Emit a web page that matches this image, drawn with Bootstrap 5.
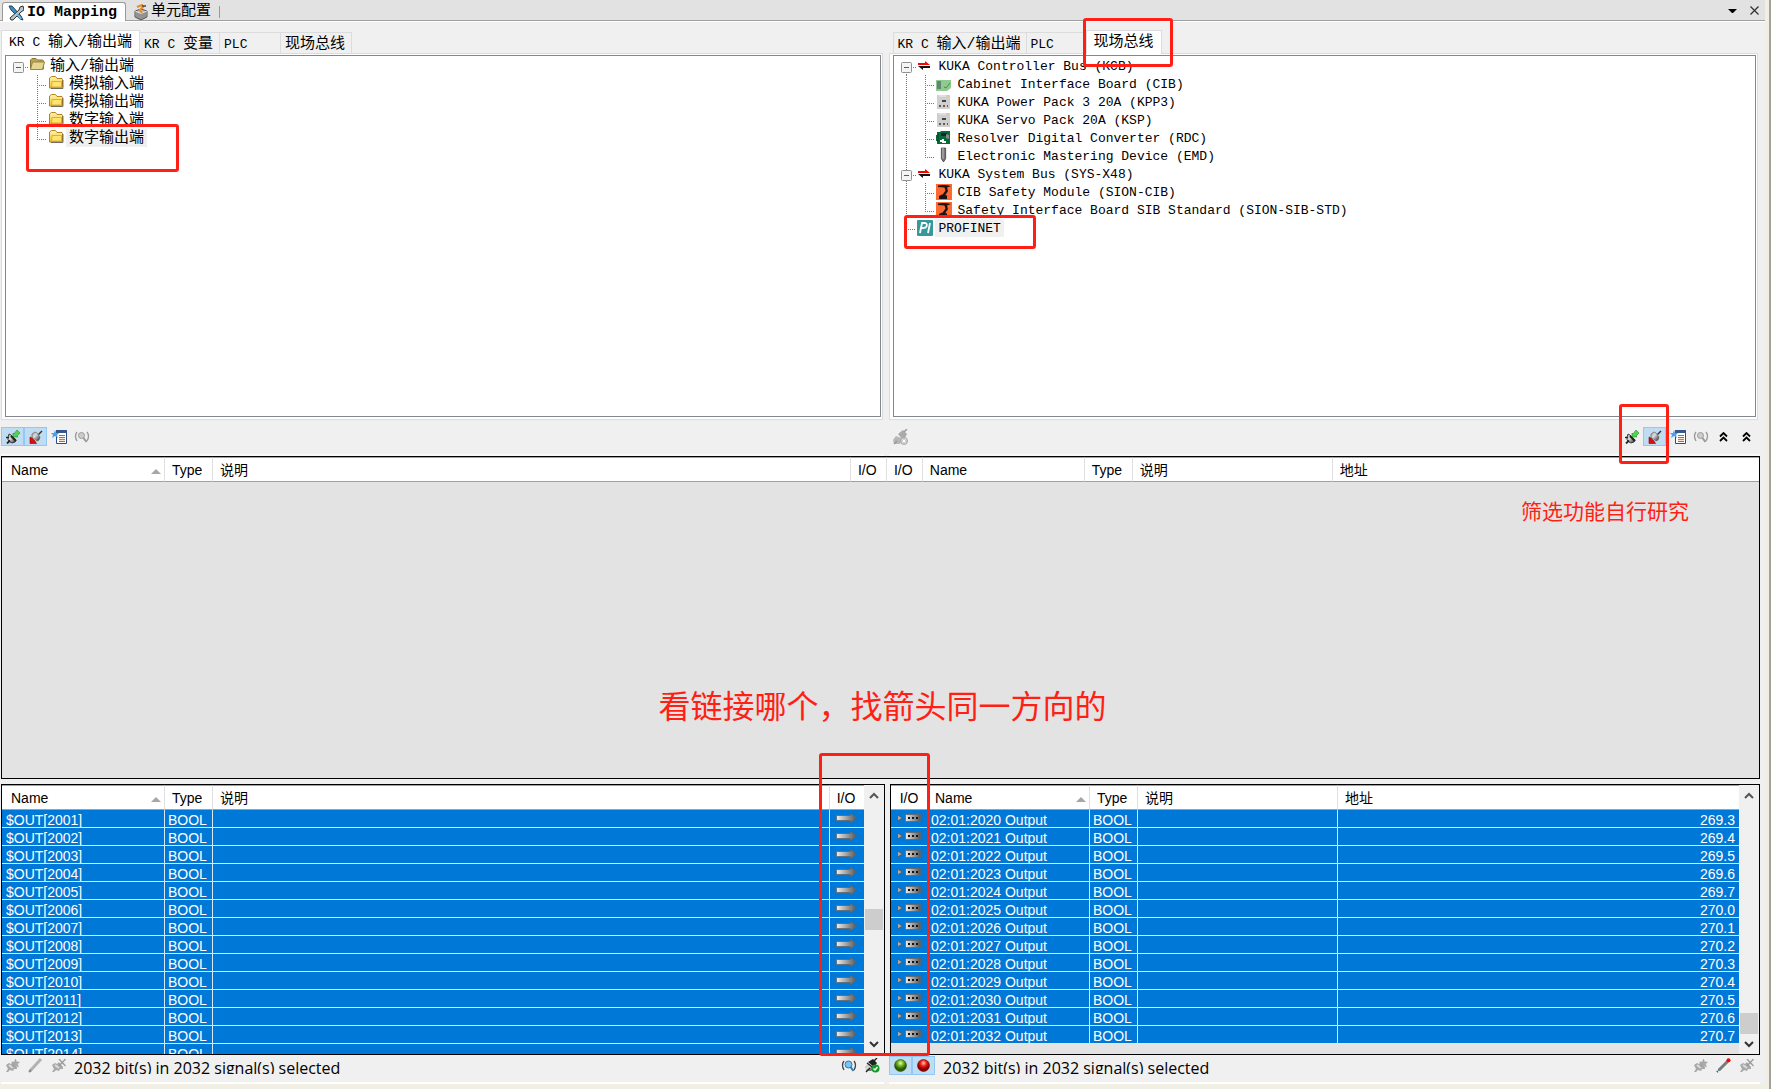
<!DOCTYPE html>
<html lang="zh-CN">
<head>
<meta charset="utf-8">
<meta name="viewport" content="width=device-width, initial-scale=1">
<title>IO Mapping</title>
<link rel="stylesheet" href="https://cdn.jsdelivr.net/npm/bootstrap@5.3.0/dist/css/bootstrap.min.css">
<style>
:root { --mono: "Liberation Mono", "Noto Sans CJK SC", monospace; --ui: "Liberation Sans", "Noto Sans CJK SC", sans-serif; --note: #ff1f14; }
body { background: #f1eee4; font-family: var(--ui); font-size: 14px; line-height: 18px; color: #000; }
button { color: #000; background: transparent; border: 0; padding: 0; }
svg { display: block; flex: none; }
.frame { min-height: 100vh; border-right: 2px solid #a3a199; padding: 0 4px 5px 0; }
.app-body { background: #f0f0f0; min-width: 0; }
.work { padding: 0 5px 0 1px; }
.half-l { flex: 884 1 0; min-width: 0; }
.half-r { flex: 870 1 0; min-width: 0; }
.pair { gap: 5px; }
.mono { font-family: var(--mono); font-size: 13px; white-space: pre; }
.zh { font-size: 15px; }

.doc-bar { height: 22px; background: #e2e2e2; border-bottom: 1px solid #fff; box-shadow: inset 0 -1px #a0a0a0; padding-left: 2px; }
.doc-tab { height: 20px; padding: 2px 8px 0 8px; line-height: 20px; gap: 3px; }
.doc-tab.active { height: 19px; background: #fff; border: 1px solid #999; border-bottom: 0; border-radius: 3px 3px 0 0; font-weight: bold; padding-left: 5px; }
.doc-sep { width: 1px; height: 12px; background: #999; margin-bottom: 3px; }
.win-keys { gap: 13px; padding-right: 6px; }

.pane-tabs { height: 31px; }
.pane-tab { height: 21px; line-height: 21px; padding: 1px 6px 0 4px; border: 1px solid #dcdcdc; border-width: 1px 1px 0 0; text-align: left; min-width: 61px; }
.pane-tab.first { border-left-width: 1px; padding: 1px 5px 0 3px; }
.right-pane .pane-tab { min-width: 59px; }
.pane-tab.active { height: 24px; margin-bottom: -1px; background: #fff; padding: 0 7px; border-left-width: 1px; line-height: 22px; z-index: 1; }
.tree-shell { border: 1px solid #dcdcdc; background: #fff; padding: 1px 1px 2px 3px; height: 367px; }
.tree-box { border: 1px solid #828790; height: 100%; padding: 1px 3px; overflow: hidden; }
.left-pane { padding-right: 1px; }
.right-pane { padding-right: 2px; }
.t-row { height: 18px; }
.t-icon { width: 19px; padding-left: 1px; flex: none; }
.t-label { line-height: 20px; height: 18px; padding: 0 3px; }
.t-label .zh { line-height: 19px; vertical-align: top; }
.t-label.sel { background: #f0f0f0; }
.anchor { position: relative; }

.tools { height: 36px; padding-top: 7px; border-bottom: 2px solid #f8f8f8; }
.tool { width: 23px; height: 19px; display: flex; align-items: center; justify-content: center; border: 1px solid transparent; }
.tool.on { background: #bfdcf3; border-color: #90c8f6; }
.status { height: 29px; padding-top: 1px; border-bottom: 2px solid #fff; }
.status-text { font-family: "Open Sans", "Noto Sans", sans-serif; font-size: 16px; line-height: 22px; height: 18px; padding: 1px 0 0 4px; overflow: hidden; white-space: nowrap; }
.status-r .status-text { padding-left: 8px; }

.sheet { border: 1px solid #000; background: #e3e3e3; overflow: hidden; }
.sheet-mid { min-height: 323px; position: relative; margin-bottom: 5px; }
.sheet-low { height: 271px; }
.sheet table { table-layout: fixed; width: 100%; border-collapse: separate; border-spacing: 0; }
.sheet th { height: 25px; padding: 0 8px 0 7px; font-weight: normal; background: #fff; border-right: 1px solid #e0e0e0; border-bottom: 1px solid #a0a0a0; border-top: 1px solid #a0a0a0; white-space: nowrap; }
.sheet th:first-child { padding-left: 9px; }
.sheet th:last-child { border-right: 0; }
.sheet th.io { text-align: center; padding: 0 2px 0 0; }
.sheet th.io:first-child { padding: 0; }
.sheet td { height: 18px; padding: 0; background: #0078d7; color: #fff; border-right: 1px solid #d9e8f5; border-bottom: 1px solid #d9e8f5; }
.sheet td:last-child { border-right: 0; }
.cell { height: 17px; overflow: hidden; padding: 1px 4px 0 3px; white-space: nowrap; }
.sheet td:first-child .cell { padding-left: 4px; }
.cell svg { margin: 2px auto 0; }
.sort { float: right; margin: 8px -5px 0 0; }
.scroller { width: 20px; background: #f0f0f0; padding: 0 1px; flex: none; }
.thumb { height: 21px; background: #cdcdcd; }
.arrow { height: 20px; width: 100%; display: flex; align-items: center; justify-content: center; }

.mark-box { position: absolute; border: 3px solid var(--note); border-radius: 3px; pointer-events: none; z-index: 5; }
.mark-out { left: -40px; top: -5px; width: 153px; height: 48px; }
.mark-bus { left: -4px; top: -13px; width: 90px; height: 49px; }
.mark-net { left: -31px; top: -4px; width: 132px; height: 34px; }
.mark-filter { left: -2px; top: -24px; width: 50px; height: 60px; }
.mark-io { left: -71px; top: -31px; width: 111px; height: 303px; }
.remark { position: absolute; color: var(--note); font-family: "Noto Sans CJK SC", sans-serif; white-space: nowrap; }
.remark-s { font-size: 21px; line-height: 30px; right: 70px; top: 38px; }
.remark-l { font-size: 32px; line-height: 40px; left: 0; right: -4px; top: 227px; text-align: center; }
</style>
<script src="https://cdn.jsdelivr.net/npm/bootstrap@5.3.0/dist/js/bootstrap.bundle.min.js"></script>
</head>
<body>
<svg width="0" height="0" class="position-absolute" aria-hidden="true">
  <defs>
    <linearGradient id="steel"><stop offset="0" stop-color="#eee"/><stop offset="1" stop-color="#555"/></linearGradient>
    <linearGradient id="gold" x2="0" y2="1"><stop offset="0" stop-color="#fff6a8"/><stop offset="1" stop-color="#f3bd3c"/></linearGradient>
    <linearGradient id="metal" x2="1" y2="1"><stop offset="0" stop-color="#999"/><stop offset=".4" stop-color="#ddd"/><stop offset="1" stop-color="#222"/></linearGradient>
    <radialGradient id="gball" cy=".3"><stop offset="0" stop-color="#e8ffc0"/><stop offset=".5" stop-color="#6fb51c"/><stop offset="1" stop-color="#2c5a05"/></radialGradient>
    <radialGradient id="rball" cy=".3"><stop offset="0" stop-color="#ffd0c0"/><stop offset=".5" stop-color="#f02010"/><stop offset="1" stop-color="#800"/></radialGradient>
  </defs>
  <symbol id="i-tools" viewBox="0 0 16 16"><path d="M1 1l3 0 9 10 2 4-3-1L3 5z" fill="#3b8ec4" stroke="#23435c"/><path d="M15 1l-3 1-1 3-9 8 1 2 2 0 8-8 3-2z" fill="#b8c4cc" stroke="#333"/><path d="M9 9l4 5" stroke="#6ec0ef" stroke-width="2"/></symbol>
  <symbol id="i-cell" viewBox="0 0 14 16"><path d="M1 7l6-2 6 2v6l-6 3-6-3z" fill="#bbb" stroke="#555"/><path d="M3 8v6M5 9v6M7 9v7M9 9v6M11 8v6" stroke="#555" stroke-width=".8" fill="none"/><path d="M1 7l6 2.500L13 7" stroke="#eee" stroke-width=".8" fill="none"/><path d="M3 3l5-2 1 2-3 3 2 3" fill="none" stroke="#ed8a22" stroke-width="2"/><path d="M8 2h4" stroke="#444" stroke-width="1.5"/></symbol>
  <symbol id="i-folder" viewBox="0 0 16 14"><path d="M1.500 12V3l2-1.500h4l1.500 2h5l.5 1V12l-1 1h-12z" fill="url(#gold)" stroke="#b98416"/><path d="M4 6.500h9.500V12H3.500z" fill="#ffe66b" stroke="#d9a02a" stroke-width=".8"/><path d="M3 13.500h12V5" stroke="#555" fill="none" stroke-width=".8"/></symbol>
  <symbol id="i-open" viewBox="0 0 16 14"><path d="M1.500 12V3l1.500-1.500h4l1.500 1.500h5l1 1V12z" fill="#b9a45a" stroke="#8d7430"/><path d="M1.500 12.500l2-7.500h12l-2 7.500z" fill="#e6d591" stroke="#9b8340"/></symbol>
  <symbol id="i-bus" viewBox="0 0 14 10"><path d="M1 2h7V0l5 4H1zM1 2h8v2H1z" fill="#f00"/><path d="M13 5H1l5 4V7h7z" fill="#111"/></symbol>
  <symbol id="i-cib" viewBox="0 0 15 13"><path d="M0 1h15v8l-4 3H0z" fill="#8fca8f"/><path d="M1 3h4M1 5h4M1 7h4M1 9h4" stroke="#345" stroke-width="1.200"/><path d="M8 8l2 1 4-5" stroke="#4b8d4b" fill="none"/></symbol>
  <symbol id="i-pack" viewBox="0 0 13 14"><path d="M0 0h13v14H0z" fill="#cfcfcf"/><path d="M2 1h7" stroke="#eee"/><path d="M10 1h2" stroke="#dc6"/><path d="M5 5h4v2H5z" fill="#444"/><path d="M2 10h2v2H2zM6 10h2v2H6zM10 10h1v2h-1z" fill="#754"/></symbol>
  <symbol id="i-rdc" viewBox="0 0 15 14"><path d="M1 1h3l1-1h9v13H1v-3H0V4h1z" fill="#0a6b3a"/><path d="M5 2h6v3H5z" fill="#124"/><path d="M10 3l3 1v4l-3-1z" fill="#888"/><path d="M6 8h2v2h2v2H6v-1H4V9h2z" fill="#fff"/><path d="M2 3v8" stroke="#043"/></symbol>
  <symbol id="i-emd" viewBox="0 0 6 15"><path d="M1 1h4v10l-2 3-2-3z" fill="#777" stroke="#444" stroke-width=".8"/><path d="M2.500 1v10" stroke="#bbb"/></symbol>
  <symbol id="i-sion" viewBox="0 0 16 16"><path d="M0 0h16v16H0z" fill="#ff6a33"/><path d="M2 1.500c4-.8 8-.8 13 .5l-4 1.500 1 3.500-3 4.500H6l3.500-5-1-3L2 3z" fill="#1b1212"/><path d="M3 12l3-1.500 5 1V15H3z" fill="#1b1212"/></symbol>
  <symbol id="i-pi" viewBox="0 0 16 16"><rect width="16" height="16" rx="1" fill="#35989a"/><path d="M3 13L5 3h3.500q2 .5 1 3.500-1 2-5 1.500M11 13l2-10" fill="none" stroke="#fff" stroke-width="1.800"/></symbol>
  <symbol id="g-minus" viewBox="0 0 19 18"><path d="M16 10.500h3" stroke="#777" stroke-dasharray="1 1"/><rect x="4.500" y="5.500" width="10" height="10" rx="1" fill="#f4f4f4" stroke="#919191"/><path d="M7 10.500h5" stroke="#3a5f9e"/></symbol>
  <symbol id="g-minus-down" viewBox="0 0 19 18"><use href="#g-minus"/><path d="M9.500 17v1" stroke="#777"/></symbol>
  <symbol id="g-minus-mid" viewBox="0 0 19 18"><path d="M9.500 0v18" stroke="#777" stroke-dasharray="1 1"/><use href="#g-minus"/></symbol>
  <symbol id="g-line" viewBox="0 0 19 18"><path d="M9.500 0v18" stroke="#777" stroke-dasharray="1 1"/></symbol>
  <symbol id="g-tee" viewBox="0 0 19 18"><path d="M9.500 0v18M9 10.500h11" stroke="#777" stroke-dasharray="1 1"/></symbol>
  <symbol id="g-end" viewBox="0 0 19 18"><path d="M9.500 0v10M9 10.500h11" stroke="#777" stroke-dasharray="1 1" fill="none"/></symbol>
  <symbol id="i-plug" viewBox="0 0 14 14"><path d="M2 7l1-3 2 1 5 5-1 2-3 1-2-1-2-2z" fill="url(#metal)" stroke="#222" stroke-width=".8"/><path d="M1 13.500l3-3" stroke="#222" stroke-width="1.800"/><path d="M0 7.500h3" stroke="#222" stroke-width="1.400"/><path d="M5 6l5 5" stroke="#222" stroke-width="2"/></symbol>
  <symbol id="i-connected" viewBox="0 0 14 14"><use href="#i-plug"/><path d="M7 7V3l1 1 3-4 3 3-3 3 1 1z" fill="#55d255" stroke="#249024" stroke-width=".6"/></symbol>
  <symbol id="i-unplugged" viewBox="0 0 14 14"><path d="M3 4l3-2 2 1 3 4-1 3-2 1-5-4z" fill="url(#metal)" stroke="#555" stroke-width=".6"/><path d="M9.500 4.500L13 1" stroke="#333" stroke-width="1.400"/><path d="M1 7l2 1 3 3 1.500 2.500H1z" fill="#d61010" stroke="#900" stroke-width=".6"/></symbol>
  <symbol id="i-list" viewBox="0 0 16 14"><path d="M5.500.5h10v13h-10z" fill="#fff" stroke="#2b4d80"/><path d="M5 0h11v3H5z" fill="#34588c"/><path d="M8 5.500h6M8 7.500h6M8 11.500h6" stroke="#777"/><path d="M8 9.500h6" stroke="#f07020" stroke-width="1.400"/><path d="M4 0l1 3 3 0-2 2 1 3-3-2-3 2 1-3-2-2h3z" fill="#4aa0ef"/></symbol>
  <symbol id="i-find" viewBox="0 0 16 12"><path d="M3 1Q0 5 3 10M13 1q3 4 0 9" fill="none" stroke="#999" stroke-width="1.300"/><circle cx="7.500" cy="4.500" r="3" fill="#ccc" stroke="#999"/><path d="M9.500 7l3 4" stroke="#999" stroke-width="2"/></symbol>
  <symbol id="i-find-on" viewBox="0 0 16 12"><path d="M3 1Q0 5 3 10M13 1q3 4 0 9" fill="none" stroke="#444" stroke-width="1.300"/><circle cx="7.500" cy="4.500" r="3.500" fill="#74c6f5" stroke="#3476a8"/><path d="M9.500 7l3 4" stroke="#3476a8" stroke-width="2"/></symbol>
  <symbol id="i-plug-off" viewBox="0 0 14 14"><path d="M0 6l3-2 2 1 2-2 4 5 0 2-3 0-1 2-3-1-2 2-2 0 2-3z" fill="#a8a8a8"/><path d="M3 6l4 3" stroke="#ddd" stroke-width="2"/></symbol>
  <symbol id="i-plug-new" viewBox="0 0 14 14"><use href="#i-plug-off"/><path d="M9.500 0l1 3h3l-2 2 1 3-3-2-3 2 1-3-2-2h3z" fill="#aaa" stroke="#999" stroke-width=".5"/></symbol>
  <symbol id="i-plug-del" viewBox="0 0 14 14"><use href="#i-plug-off"/><path d="M7 0l6.500 7M13.500 0L7 7" stroke="#999" stroke-width="1.300"/></symbol>
  <symbol id="i-pair-off" viewBox="0 0 15 16"><path d="M5 5l5-4 4 4-2 4-3 1z" fill="#aaa"/><path d="M0 11l3-4 5 2 2 4-4 2H1z" fill="#b6b6b6"/><path d="M11 3l3-3M1 15l3-3" stroke="#999" stroke-width="1.500"/><circle cx="11" cy="12" r="3.500" fill="#ccc" stroke="#aaa"/><path d="M9.500 10.500l3 3m0-3l-3 3" stroke="#fff"/></symbol>
  <symbol id="i-pair-ok" viewBox="0 0 15 15"><path d="M3 4l5-3 4 4-3 4z" fill="#222"/><path d="M0 9l3-3 6 4-3 3H1z" fill="url(#metal)"/><path d="M9 3l3-3M1 14l4-4M2 5l8 6" stroke="#222" stroke-width="1.400"/><circle cx="10.500" cy="10.500" r="4" fill="#149a28"/><path d="M8.500 10.500l1.500 1.500 2.500-3" stroke="#fff" fill="none" stroke-width="1.300"/></symbol>
  <symbol id="i-pen" viewBox="0 0 15 15"><path d="M2 13L13 1" stroke="#b2b2b2" stroke-width="3"/><path d="M1 14l2-2" stroke="#888" stroke-width="2"/></symbol>
  <symbol id="i-pen-red" viewBox="0 0 15 15"><path d="M3 12L12 3" stroke="#7a7a7a" stroke-width="3"/><circle cx="12.500" cy="2.200" r="2" fill="#f00"/><path d="M1 14l2-2" stroke="#155" stroke-width="2" stroke-dasharray="1 1"/></symbol>
  <symbol id="i-up2" viewBox="0 0 9 10"><path d="M1 4.500L4.500 1 8 4.500M1 9l3.500-3.500L8 9" fill="none" stroke="#000" stroke-width="1.800"/></symbol>
  <symbol id="i-out" viewBox="0 0 21 10"><path d="M.5 2.500h14V.5l6 4.500-6 4.500v-2H.5z" fill="url(#steel)" stroke="#666" stroke-width=".8"/></symbol>
  <symbol id="i-port" viewBox="0 0 24 8"><path d="M.5 1l5 3-5 3z" fill="#aaa" stroke="#555" stroke-width=".8"/><path d="M8.500.5h15v7h-15z" fill="url(#steel)" stroke="#666" stroke-width=".8"/><path d="M11 3h2v2h-2zM15 3h2v2h-2zM19 3h2v2h-2z" fill="#111"/></symbol>
  <symbol id="i-sort" viewBox="0 0 10 5"><path d="M0 5l5-5 5 5z" fill="#a6a6a6"/></symbol>
  <symbol id="i-up" viewBox="0 0 10 7"><path d="M1 6l4-4 4 4" fill="none" stroke="#555" stroke-width="2"/></symbol>
  <symbol id="i-down" viewBox="0 0 10 7"><path d="M1 1l4 4 4-4" fill="none" stroke="#333" stroke-width="2"/></symbol>
</svg>

<div class="frame d-flex">
<div class="app-body d-flex flex-column flex-grow-1">

  <header class="doc-bar d-flex align-items-end">
    <button class="doc-tab active mono zh d-flex align-items-center"><svg width="16" height="16"><use href="#i-tools"/></svg>IO Mapping</button>
    <button class="doc-tab mono zh d-flex align-items-center"><svg width="14" height="16"><use href="#i-cell"/></svg>单元配置</button>
    <span class="doc-sep"></span>
    <div class="win-keys ms-auto d-flex align-items-center align-self-center">
      <button aria-label="列表"><svg width="9" height="4"><path d="M0 0h9L5 4H4z"/></svg></button>
      <button aria-label="关闭"><svg width="9" height="9"><path d="M.5.5l8 8m0-8l-8 8" stroke="#333" stroke-width="1.300"/></svg></button>
    </div>
  </header>

  <main class="work d-flex flex-column flex-grow-1">
    <div class="d-flex pair">
      <section class="half-l left-pane">
        <div class="pane-tabs d-flex align-items-end" role="tablist">
          <button class="pane-tab active mono anchor" role="tab">KR C <span class="zh">输入/输出端</span></button>
          <button class="pane-tab mono" role="tab">KR C <span class="zh">变量</span></button>
          <button class="pane-tab mono" role="tab">PLC</button>
          <button class="pane-tab mono" role="tab"><span class="zh">现场总线</span></button>
        </div>
        <div class="tree-shell"><div class="tree-box">
          <ul class="list-unstyled mb-0">
            <li class="t-row d-flex"><svg width="19" height="18"><use href="#g-minus"/></svg><span class="t-icon"><svg width="16" height="14"><use href="#i-open"/></svg></span><span class="t-label mono"><span class="zh">输入/输出端</span></span></li>
            <li class="t-row d-flex"><svg width="19" height="18"></svg><svg width="19" height="18"><use href="#g-tee"/></svg><span class="t-icon"><svg width="16" height="14"><use href="#i-folder"/></svg></span><span class="t-label mono"><span class="zh">模拟输入端</span></span></li>
            <li class="t-row d-flex"><svg width="19" height="18"></svg><svg width="19" height="18"><use href="#g-tee"/></svg><span class="t-icon"><svg width="16" height="14"><use href="#i-folder"/></svg></span><span class="t-label mono"><span class="zh">模拟输出端</span></span></li>
            <li class="t-row d-flex"><svg width="19" height="18"></svg><svg width="19" height="18"><use href="#g-tee"/></svg><span class="t-icon"><svg width="16" height="14"><use href="#i-folder"/></svg></span><span class="t-label mono"><span class="zh">数字输入端</span></span></li>
            <li class="t-row d-flex"><svg width="19" height="18"></svg><svg width="19" height="18"><use href="#g-end"/></svg><span class="t-icon"><svg width="16" height="14"><use href="#i-folder"/></svg></span><span class="t-label mono sel anchor"><span class="zh">数字输出端</span><i class="mark-box mark-out"></i></span></li>
          </ul>
        </div></div>
      </section>

      <section class="half-r right-pane">
        <div class="pane-tabs d-flex align-items-end ps-1" role="tablist">
          <button class="pane-tab first mono" role="tab">KR C <span class="zh">输入/输出端</span></button>
          <button class="pane-tab mono" role="tab">PLC</button>
          <button class="pane-tab active mono anchor" role="tab"><span class="zh">现场总线</span><i class="mark-box mark-bus"></i></button>
        </div>
        <div class="tree-shell"><div class="tree-box">
          <ul class="list-unstyled mb-0">
            <li class="t-row d-flex"><svg width="19" height="18"><use href="#g-minus-down"/></svg><span class="t-icon pt-1"><svg width="14" height="10"><use href="#i-bus"/></svg></span><span class="t-label mono">KUKA Controller Bus (KCB)</span></li>
            <li class="t-row d-flex"><svg width="19" height="18"><use href="#g-line"/></svg><svg width="19" height="18"><use href="#g-tee"/></svg><span class="t-icon pt-1"><svg width="15" height="13"><use href="#i-cib"/></svg></span><span class="t-label mono">Cabinet Interface Board (CIB)</span></li>
            <li class="t-row d-flex align-items-center"><svg width="19" height="18"><use href="#g-line"/></svg><svg width="19" height="18"><use href="#g-tee"/></svg><span class="t-icon"><svg width="15" height="14"><use href="#i-pack"/></svg></span><span class="t-label mono">KUKA Power Pack 3 20A (KPP3)</span></li>
            <li class="t-row d-flex align-items-center"><svg width="19" height="18"><use href="#g-line"/></svg><svg width="19" height="18"><use href="#g-tee"/></svg><span class="t-icon"><svg width="15" height="14"><use href="#i-pack"/></svg></span><span class="t-label mono">KUKA Servo Pack 20A (KSP)</span></li>
            <li class="t-row d-flex align-items-center"><svg width="19" height="18"><use href="#g-line"/></svg><svg width="19" height="18"><use href="#g-tee"/></svg><span class="t-icon"><svg width="15" height="14"><use href="#i-rdc"/></svg></span><span class="t-label mono">Resolver Digital Converter (RDC)</span></li>
            <li class="t-row d-flex"><svg width="19" height="18"><use href="#g-line"/></svg><svg width="19" height="18"><use href="#g-end"/></svg><span class="t-icon"><svg width="15" height="16"><use href="#i-emd"/></svg></span><span class="t-label mono">Electronic Mastering Device (EMD)</span></li>
            <li class="t-row d-flex"><svg width="19" height="18"><use href="#g-minus-mid"/></svg><span class="t-icon pt-1"><svg width="14" height="10"><use href="#i-bus"/></svg></span><span class="t-label mono">KUKA System Bus (SYS-X48)</span></li>
            <li class="t-row d-flex align-items-center"><svg width="19" height="18"><use href="#g-line"/></svg><svg width="19" height="18"><use href="#g-tee"/></svg><span class="t-icon"><svg width="16" height="16"><use href="#i-sion"/></svg></span><span class="t-label mono">CIB Safety Module (SION-CIB)</span></li>
            <li class="t-row d-flex align-items-center"><svg width="19" height="18"><use href="#g-line"/></svg><svg width="19" height="18"><use href="#g-end"/></svg><span class="t-icon"><svg width="16" height="16"><use href="#i-sion"/></svg></span><span class="t-label mono">Safety Interface Board SIB Standard (SION-SIB-STD)</span></li>
            <li class="t-row d-flex align-items-center"><svg width="19" height="18"><use href="#g-end"/></svg><span class="t-icon"><svg width="16" height="16"><use href="#i-pi"/></svg></span><span class="t-label mono sel anchor">PROFINET<i class="mark-box mark-net"></i></span></li>
          </ul>
        </div></div>
      </section>
    </div>

    <div class="d-flex pair">
      <div class="half-l tools d-flex align-items-start" role="toolbar">
        <button class="tool on" aria-label="已连接"><svg width="14" height="14"><use href="#i-connected"/></svg></button>
        <button class="tool on" aria-label="未连接"><svg width="14" height="14"><use href="#i-unplugged"/></svg></button>
        <button class="tool" aria-label="筛选"><svg width="16" height="14"><use href="#i-list"/></svg></button>
        <button class="tool" aria-label="查找"><svg width="16" height="12"><use href="#i-find"/></svg></button>
      </div>
      <div class="half-r right-pane tools d-flex align-items-start" role="toolbar">
        <button class="tool" aria-label="断开"><svg width="15" height="16"><use href="#i-pair-off"/></svg></button>
        <button class="tool ms-auto anchor" aria-label="已连接"><svg width="14" height="14"><use href="#i-connected"/></svg><i class="mark-box mark-filter"></i></button>
        <button class="tool on" aria-label="未连接"><svg width="14" height="14"><use href="#i-unplugged"/></svg></button>
        <button class="tool" aria-label="筛选"><svg width="16" height="14"><use href="#i-list"/></svg></button>
        <button class="tool" aria-label="查找"><svg width="16" height="12"><use href="#i-find"/></svg></button>
        <button class="tool" aria-label="收起"><svg width="9" height="10"><use href="#i-up2"/></svg></button>
        <button class="tool" aria-label="全部收起"><svg width="9" height="10"><use href="#i-up2"/></svg></button>
      </div>
    </div>

    <section class="sheet sheet-mid flex-grow-1">
      <table>
        <colgroup><col style="width:163px"><col style="width:48px"><col style="width:36.3%"><col style="width:36px"><col style="width:36px"><col style="width:162px"><col style="width:48px"><col style="width:200px"><col></colgroup>
        <thead><tr><th>Name<svg class="sort" width="10" height="5"><use href="#i-sort"/></svg></th><th>Type</th><th>说明</th><th class="io">I/O</th><th class="io">I/O</th><th>Name</th><th>Type</th><th>说明</th><th>地址</th></tr></thead>
      </table>
      <div class="remark remark-s">筛选功能自行研究</div>
      <div class="remark remark-l">看链接哪个，找箭头同一方向的</div>
    </section>

    <div class="d-flex pair">
      <section class="half-l">
        <div class="sheet sheet-low d-flex">
          <div class="flex-grow-1">
            <table>
              <colgroup><col style="width:163px"><col style="width:48px"><col><col style="width:34px"></colgroup>
              <thead><tr><th>Name<svg class="sort" width="10" height="5"><use href="#i-sort"/></svg></th><th>Type</th><th>说明</th><th class="io">I/O</th></tr></thead>
              <tbody id="outs"></tbody>
            </table>
          </div>
          <div class="scroller d-flex flex-column">
            <button class="arrow" aria-label="向上"><svg width="10" height="7"><use href="#i-up"/></svg></button>
            <div class="thumb mt-auto"></div>
            <button class="arrow mt-auto" aria-label="向下"><svg width="10" height="7"><use href="#i-down"/></svg></button>
          </div>
        </div>
      </section>
      <section class="half-r anchor">
        <i class="mark-box mark-io"></i>
        <div class="sheet sheet-low d-flex">
          <div class="flex-grow-1">
            <table>
              <colgroup><col style="width:37px"><col style="width:162px"><col style="width:48px"><col style="width:200px"><col></colgroup>
              <thead><tr><th class="io">I/O</th><th>Name<svg class="sort" width="10" height="5"><use href="#i-sort"/></svg></th><th>Type</th><th>说明</th><th>地址</th></tr></thead>
              <tbody id="signals"></tbody>
            </table>
          </div>
          <div class="scroller d-flex flex-column">
            <button class="arrow" aria-label="向上"><svg width="10" height="7"><use href="#i-up"/></svg></button>
            <div class="thumb mt-auto"></div>
            <button class="arrow" aria-label="向下"><svg width="10" height="7"><use href="#i-down"/></svg></button>
          </div>
        </div>
      </section>
    </div>

    <footer class="d-flex pair">
      <div class="half-l status d-flex">
        <button class="tool" aria-label="新建"><svg width="14" height="14"><use href="#i-plug-new"/></svg></button>
        <button class="tool" aria-label="编辑"><svg width="15" height="15"><use href="#i-pen"/></svg></button>
        <button class="tool" aria-label="删除"><svg width="14" height="14"><use href="#i-plug-del"/></svg></button>
        <div class="status-text">2032 bit(s) in 2032 signal(s) selected</div>
        <button class="tool ms-auto" aria-label="查找"><svg width="16" height="12"><use href="#i-find-on"/></svg></button>
        <button class="tool" aria-label="连接"><svg width="15" height="15"><use href="#i-pair-ok"/></svg></button>
      </div>
      <div class="half-r right-pane status status-r d-flex">
        <button class="tool on" aria-label="输入"><svg width="13" height="13"><circle cx="6.500" cy="6.500" r="6" fill="url(#gball)" stroke="#2c5a05" stroke-width=".6"/></svg></button>
        <button class="tool on" aria-label="输出"><svg width="13" height="13"><circle cx="6.500" cy="6.500" r="6" fill="url(#rball)" stroke="#700" stroke-width=".6"/></svg></button>
        <div class="status-text">2032 bit(s) in 2032 signal(s) selected</div>
        <button class="tool ms-auto" aria-label="新建"><svg width="14" height="14"><use href="#i-plug-new"/></svg></button>
        <button class="tool" aria-label="编辑"><svg width="15" height="15"><use href="#i-pen-red"/></svg></button>
        <button class="tool" aria-label="删除"><svg width="14" height="14"><use href="#i-plug-del"/></svg></button>
      </div>
    </footer>
  </main>
</div>
</div>
<script>
const cell = (text, cls = '') => `<td><div class="cell ${cls}">${text}</div></td>`;
let outs = '', signals = '';
for (let n = 2001; n <= 2014; n++) {
  outs += `<tr>${cell(`$OUT[${n}]`)}${cell('BOOL')}${cell('')}${cell('<svg width="21" height="10"><use href="#i-out"/></svg>')}</tr>`;
}
for (let n = 2020; n <= 2032; n++) {
  // addresses count up in bits, eight to a byte
  const bit = 269 * 8 + 3 + (n - 2020);
  signals += `<tr>${cell('<svg width="24" height="10"><use href="#i-port"/></svg>')}${cell(`02:01:${n} Output`)}${cell('BOOL')}${cell('')}${cell(`${Math.floor(bit / 8)}.${bit % 8}`, 'text-end')}</tr>`;
}
document.getElementById('outs').innerHTML = outs;
document.getElementById('signals').innerHTML = signals;
</script>
</body>
</html>
